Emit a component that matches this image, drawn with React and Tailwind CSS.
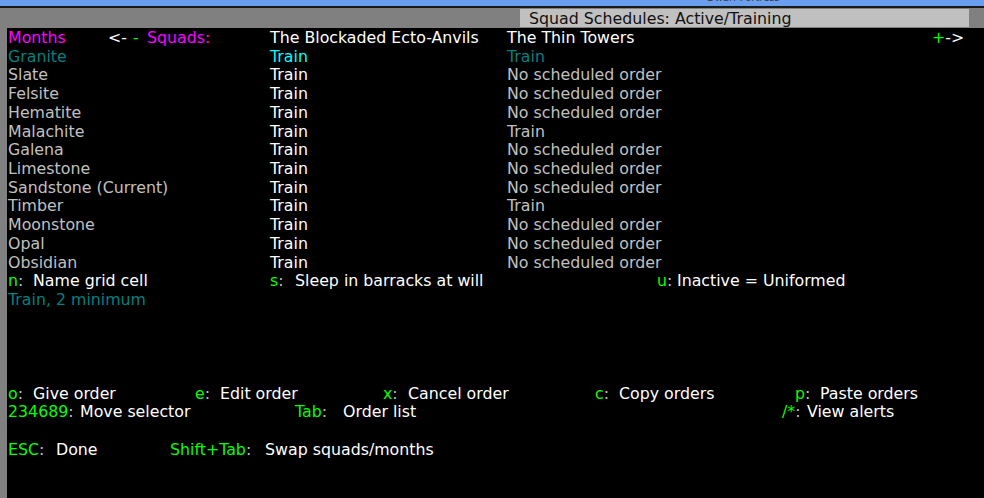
import React from "react";

const G = "text-[#00ff00]";
const W = "text-white";
const L = "text-[#c0c0c0]";
const M = "text-[#ff00ff]";
const C = "text-[#00ffff]";
const T = "text-[#008080]";

const months = [
  ["Granite", "Train", "Train", T, C, T],
  ["Slate", "Train", "No scheduled order", L, W, L],
  ["Felsite", "Train", "No scheduled order", L, W, L],
  ["Hematite", "Train", "No scheduled order", L, W, L],
  ["Malachite", "Train", "Train", L, W, L],
  ["Galena", "Train", "No scheduled order", L, W, L],
  ["Limestone", "Train", "No scheduled order", L, W, L],
  ["Sandstone (Current)", "Train", "No scheduled order", L, W, L],
  ["Timber", "Train", "Train", L, W, L],
  ["Moonstone", "Train", "No scheduled order", L, W, L],
  ["Opal", "Train", "No scheduled order", L, W, L],
  ["Obsidian", "Train", "No scheduled order", L, W, L],
];

function Row({ children }) {
  return <div className="flex h-[18.73px] items-center whitespace-pre">{children}</div>;
}

function Key({ k, w }) {
  return (
    <span className={`shrink-0 ${w}`}>
      <span className={G}>{k}</span>
      <span className={L}>:</span>
    </span>
  );
}

export default function App() {
  return (
    <div
      className="w-[984px] h-[498px] overflow-hidden bg-black flex flex-col"
      style={{ fontFamily: '"DejaVu Sans", "Liberation Sans", sans-serif' }}
    >
      <div className="h-[6px] shrink-0 bg-[#6a9ff0] overflow-hidden">
        <div className="pl-[707px] -mt-[8px] text-[10px] leading-[12px] text-[#3a3a3a]">Dwarf Fortress</div>
      </div>
      <div className="h-[2px] shrink-0 bg-[#1a1a1a]" />
      <div className="h-[20px] shrink-0 bg-[#808080] flex pt-[1px]">
        <div className="w-[520px] shrink-0" />
        <div className="w-[449px] h-[18px] bg-[#c0c0c0] pl-[9px] pt-[2px] flex items-center text-[15.8px] text-[#111] whitespace-pre">
          Squad Schedules: Active/Training
        </div>
      </div>
      <div className="flex flex-1">
        <div className="w-[7px] shrink-0 bg-[#808080]" />
        <div className="flex-1 pl-[1px] pt-[1px] text-[15.8px] leading-[18.73px]">
          <Row>
            <span className={`w-[100px] shrink-0 ${M}`}>Months</span>
            <span className={`w-[25px] shrink-0 ${W}`}>{"<-"}</span>
            <span className={`w-[14px] shrink-0 ${G}`}>-</span>
            <span className={`w-[123px] shrink-0 ${M}`}>Squads:</span>
            <span className={`w-[237px] shrink-0 ${W}`}>The Blockaded Ecto-Anvils</span>
            <span className={`w-[425px] shrink-0 ${W}`}>The Thin Towers</span>
            <span className={G}>+</span>
            <span className={W}>{"->"}</span>
          </Row>
          {months.map(([m, a, b, cm, ca, cb]) => (
            <Row key={m}>
              <span className={`w-[262px] shrink-0 ${cm}`}>{m}</span>
              <span className={`w-[237px] shrink-0 ${ca}`}>{a}</span>
              <span className={cb}>{b}</span>
            </Row>
          ))}
          <Row>
            <Key k="n" w="w-[25px]" />
            <span className={`w-[237px] shrink-0 ${W}`}>Name grid cell</span>
            <Key k="s" w="w-[25px]" />
            <span className={`w-[362px] shrink-0 ${W}`}>Sleep in barracks at will</span>
            <Key k="u" w="w-[20px]" />
            <span className={W}>Inactive = Uniformed</span>
          </Row>
          <Row>
            <span className={T}>Train, 2 minimum</span>
          </Row>
          <Row />
          <Row />
          <Row />
          <Row />
          <Row>
            <Key k="o" w="w-[25px]" />
            <span className={`w-[162px] shrink-0 ${W}`}>Give order</span>
            <Key k="e" w="w-[25px]" />
            <span className={`w-[163px] shrink-0 ${W}`}>Edit order</span>
            <Key k="x" w="w-[25px]" />
            <span className={`w-[187px] shrink-0 ${W}`}>Cancel order</span>
            <Key k="c" w="w-[24px]" />
            <span className={`w-[176px] shrink-0 ${W}`}>Copy orders</span>
            <Key k="p" w="w-[25px]" />
            <span className={W}>Paste orders</span>
          </Row>
          <Row>
            <Key k="234689" w="w-[72px]" />
            <span className={`w-[215px] shrink-0 ${W}`}>Move selector</span>
            <Key k="Tab" w="w-[48px]" />
            <span className={`w-[439px] shrink-0 ${W}`}>Order list</span>
            <Key k="/*" w="w-[25px]" />
            <span className={W}>View alerts</span>
          </Row>
          <Row />
          <Row>
            <Key k="ESC" w="w-[48px]" />
            <span className={`w-[114px] shrink-0 ${W}`}>Done</span>
            <Key k="Shift+Tab" w="w-[95px]" />
            <span className={W}>Swap squads/months</span>
          </Row>
        </div>
      </div>
    </div>
  );
}
